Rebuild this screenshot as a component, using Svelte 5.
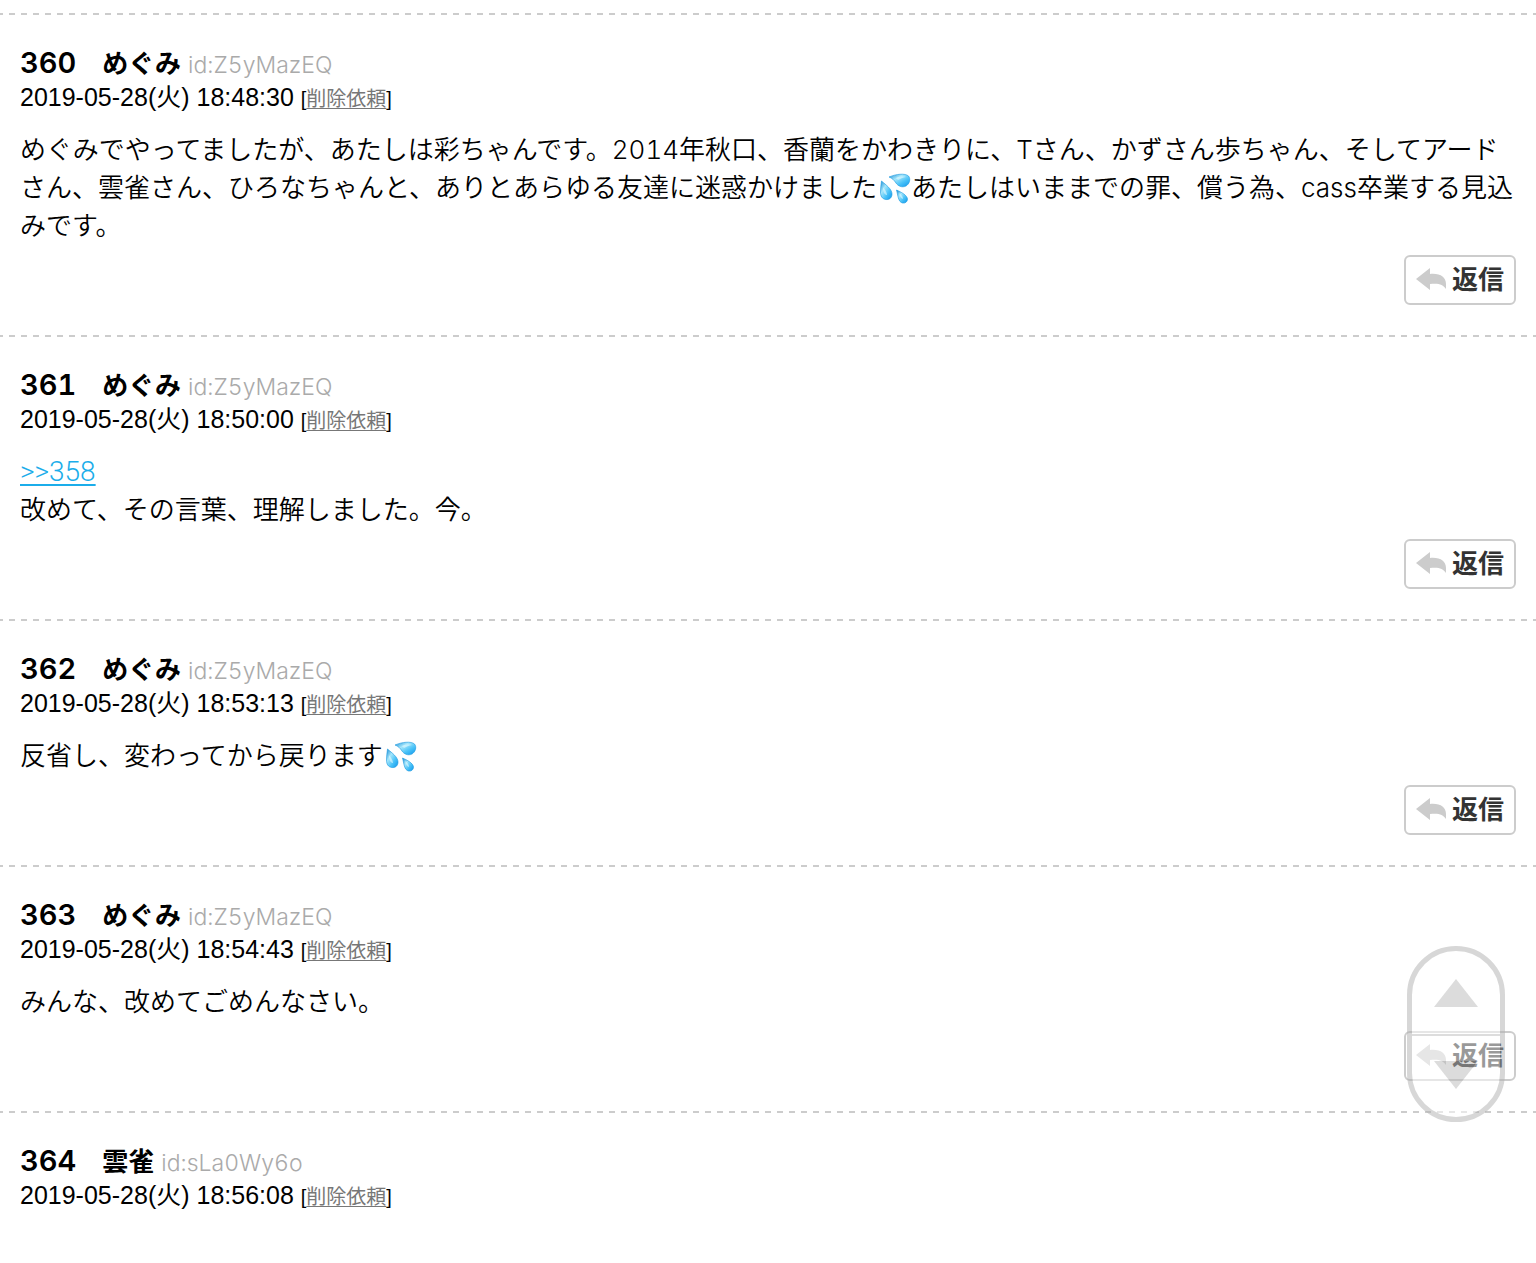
<script>
  const posts = [
    {
      no: 360,
      name: "めぐみ",
      id: "Z5yMazEQ",
      date: "2019-05-28(火) 18:48:30",
      body:
        "めぐみでやってましたが、あたしは彩ちゃんです。2014年秋口、香蘭をかわきりに、Tさん、かずさん歩ちゃん、そしてアードさん、雲雀さん、ひろなちゃんと、ありとあらゆる友達に迷惑かけました💦あたしはいままでの罪、償う為、cass卒業する見込みです。"
    },
    {
      no: 361,
      name: "めぐみ",
      id: "Z5yMazEQ",
      date: "2019-05-28(火) 18:50:00",
      anchor: 358,
      body: "改めて、その言葉、理解しました。今。"
    },
    {
      no: 362,
      name: "めぐみ",
      id: "Z5yMazEQ",
      date: "2019-05-28(火) 18:53:13",
      body: "反省し、変わってから戻ります💦"
    },
    {
      no: 363,
      name: "めぐみ",
      id: "Z5yMazEQ",
      date: "2019-05-28(火) 18:54:43",
      body: "みんな、改めてごめんなさい。"
    },
    {
      no: 364,
      name: "雲雀",
      id: "sLa0Wy6o",
      date: "2019-05-28(火) 18:56:08"
    }
  ];

  function scrollPage(top) {
    window.scrollTo({ top, behavior: "smooth" });
  }
</script>

<style>
  :global(body) {
    background: #fff;
    color: #000;
    font-family: Inter, "Noto Sans CJK JP", sans-serif;
    font-variant-numeric: tabular-nums;
  }

  main {
    padding-top: 13px;
  }

  /* dashed rule on top, drawn as a background to get 6px dashes */
  article {
    padding: 34px 20px 30px;
    background: linear-gradient(90deg, #ccc 50%, transparent 50%) -3px 0 / 12px 2px repeat-x;
  }

  h2 {
    margin: 0;
    font-size: 26px;
    font-weight: 600;
    line-height: 34px;
  }

  .no {
    font-size: 29px;
    line-height: 1;
  }

  .id {
    color: #aaa;
    font-size: 23px;
    font-weight: 300;
    line-height: 1;
  }

  .meta {
    font-family: "Liberation Sans", "Noto Sans CJK JP", sans-serif;
    font-size: 25px;
    line-height: 32px;
  }

  .report {
    font-size: 20px;
    line-height: 1;
  }

  .report a {
    color: #777;
    text-decoration-thickness: 1px;
    text-underline-offset: 2px;
  }

  .body {
    margin: 18px 0 10px;
    font-size: 26px;
    line-height: 38px;
    font-weight: 350;
    line-break: strict;
  }

  .anchor {
    display: block;
    color: #1badea;
    font-family: Roboto, sans-serif;
    font-size: 28px;
    font-weight: 300;
    text-decoration-thickness: 2px;
    text-underline-offset: 3px;
  }

  .drops {
    width: 32px;
    height: 32px;
    margin-left: 2px;
    vertical-align: -8px;
  }

  .actions {
    display: flex;
    justify-content: flex-end;
  }

  .reply {
    display: flex;
    align-items: center;
    gap: 6px;
    height: 50px;
    padding: 0 10px;
    border: 2px solid #ccc;
    border-radius: 6px;
    background: #fff;
    color: #333;
    font: inherit;
    font-size: 26px;
    font-weight: 700;
    line-height: 38px;
    cursor: pointer;
  }

  .reply svg {
    width: 30px;
    height: 24px;
  }

  .scroller {
    position: fixed;
    right: 31px;
    bottom: 141px;
    display: flex;
    flex-direction: column;
    box-sizing: border-box;
    width: 98px;
    height: 176px;
    border: 5px solid #afafaf;
    border-radius: 49px;
    overflow: hidden;
    background: #fff;
    opacity: 0.5;
  }

  .scroller button {
    flex: 1 1 83px;
    display: flex;
    align-items: center;
    justify-content: center;
    border: 0;
    padding: 0;
    background: none;
    cursor: pointer;
  }

  .scroller button + button {
    border-top: 2px solid #bbb;
    padding-bottom: 4px;
  }

  .scroller svg {
    width: 44px;
    height: 28px;
    fill: #b9b9b9;
  }
</style>

{#snippet drops()}
  <svg class="drops" viewBox="0 0 32 32" role="img" aria-label="💦">
    <defs>
      <linearGradient id="water" x1="0" y1="0" x2="1" y2="1">
        <stop offset="0" stop-color="#1c8fd6" />
        <stop offset="0.35" stop-color="#a5e6fb" />
        <stop offset="0.65" stop-color="#4bc3f8" />
        <stop offset="1" stop-color="#0d96ec" />
      </linearGradient>
    </defs>
    <g fill="url(#water)" stroke="#1597df" stroke-width="0.6">
      <path d="M10 4 C17 1 26 0 29.500 3 C32 6 30.500 11 27 13 C23 15 19 13 17 10 C15 7 13 5 10 4 Z" />
      <path d="M2.500 8 C7 12 13 16 13 21 C13 25 10 27 7 26.500 C3 26 1.500 23 1.500 19 C1.500 15 2 12 2.500 8 Z" />
      <path d="M17.500 17 C22 19 28 22 28.500 26 C28.500 29 26 30.500 23.500 30 C19 29 19 22 17.500 17 Z" />
    </g>
    <g fill="#e3faff" opacity="0.6">
      <path d="M17 5 C21 3 25 3 27 4 C24 4.500 21 6 19 7 Z" />
      <path d="M4 14 C6 17 8 19 8 22 C6 22 4 20 4 14 Z" />
      <path d="M20 20 C23 22 24 24 24 26 C21 25 21 22 20 20 Z" />
    </g>
  </svg>
{/snippet}

<main>
  {#each posts as post}
    <article>
      <h2><span class="no">{post.no}</span>　{post.name} <span class="id">id:{post.id}</span></h2>
      <div class="meta">
        {post.date}
        <span class="report">[<a href="#report-{post.no}">削除依頼</a>]</span>
      </div>
      {#if post.body}
        <div class="body">
          {#if post.anchor}
            <a class="anchor" href="#{post.anchor}">&gt;&gt;{post.anchor}</a>
          {/if}
          {#each post.body.split("💦") as part, i}{#if i > 0}{@render drops()}{/if}{part}{/each}
        </div>
        <div class="actions">
          <button class="reply" type="button">
            <svg viewBox="0 0 30 24" aria-hidden="true">
              <path fill="#ccc" d="M0 11 L14 0 V6 C24 5 30 9 30 16 V21 C27 16 22 15 14 16 V22 Z" />
            </svg>
            返信
          </button>
        </div>
      {/if}
    </article>
  {/each}
</main>

<div class="scroller">
  <button type="button" aria-label="上へ" onclick={() => scrollPage(0)}>
    <svg viewBox="0 0 44 28"><path d="M22 0 L44 28 H0 Z" /></svg>
  </button>
  <button type="button" aria-label="下へ" onclick={() => scrollPage(document.body.scrollHeight)}>
    <svg viewBox="0 0 44 28"><path d="M0 0 H44 L22 28 Z" /></svg>
  </button>
</div>
